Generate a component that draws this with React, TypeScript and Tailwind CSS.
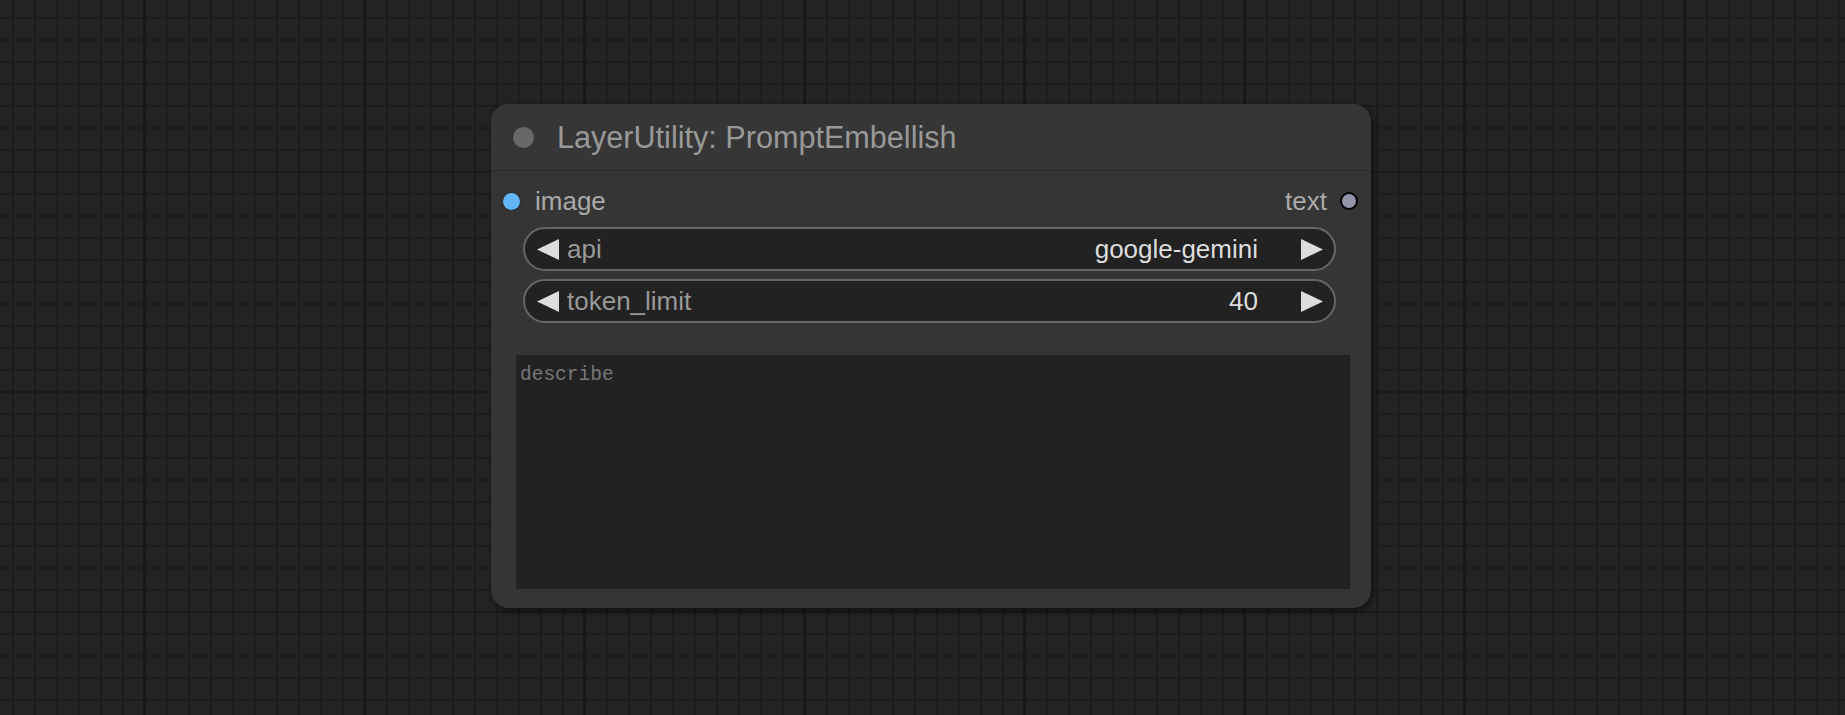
import React from "react";

function LeftArrow() {
  return (
    <svg width="22" height="21" viewBox="0 0 22 21" className="shrink-0">
      <polygon points="22,0 22,21 0,10.5" fill="#dddddd" />
    </svg>
  );
}

function RightArrow() {
  return (
    <svg width="22" height="21" viewBox="0 0 22 21" className="shrink-0">
      <polygon points="0,0 0,21 22,10.5" fill="#dddddd" />
    </svg>
  );
}

function ComboWidget({ label, value, extra }: { label: string; value: string; extra: string }) {
  return (
    <div
      className={`ml-[32px] mr-[35px] h-[44px] rounded-full border-2 border-[#666666] bg-[#222222] flex items-center pl-[12px] pr-[11px] ${extra}`}
    >
      <LeftArrow />
      <span className="ml-[8px] text-[26px] leading-none text-[#999999]">{label}</span>
      <span className="ml-auto text-[26px] leading-none text-[#dddddd]">{value}</span>
      <span className="ml-[43px] flex">
        <RightArrow />
      </span>
    </div>
  );
}

export default function App() {
  return (
    <div
      className="relative w-[1845px] h-[715px] overflow-hidden bg-[#232323] [background-image:linear-gradient(to_right,#181818_3px,transparent_3px),linear-gradient(to_bottom,#1a1a1a_2px,transparent_2px),linear-gradient(to_right,#1c1c1c_2px,transparent_2px),linear-gradient(to_bottom,#1c1c1c_2px,transparent_2px)] [background-size:220px_220px,220px_220px,22px_22px,22px_22px] [background-position:143px_170px,143px_171px,12px_17px,12px_17px]"
      style={{ fontFamily: '"Liberation Sans", Arial, sans-serif' }}
    >
      <div className="absolute left-[491px] top-[104px] w-[880px] h-[504px] rounded-[18px] bg-[#353535] shadow-[2px_3px_7px_rgba(0,0,0,0.55)] flex flex-col overflow-hidden">
        {/* title */}
        <div className="h-[67px] shrink-0 bg-[#363636] border-b border-[#292929] flex items-center pl-[22px] gap-[23px]">
          <div className="w-[21px] h-[21px] rounded-full bg-[#686868]" />
          <span className="text-[30.6px] leading-none text-[#999999]">LayerUtility: PromptEmbellish</span>
        </div>
        {/* slots */}
        <div className="mt-[8px] h-[44px] flex items-center justify-between pl-[12px] pr-[13px]">
          <div className="flex items-center gap-[15px]">
            <div className="w-[17px] h-[17px] rounded-full bg-[#64b5f6] shadow-[0_0_2px_rgba(0,0,0,0.6)]" />
            <span className="text-[26px] leading-none text-[#aaaaaa]">image</span>
          </div>
          <div className="flex items-center gap-[13px]">
            <span className="text-[26px] leading-none text-[#aaaaaa]">text</span>
            <div className="w-[18px] h-[18px] rounded-full bg-[#9393a9] border-2 border-black" />
          </div>
        </div>
        <ComboWidget label="api" value="google-gemini" extra="mt-[4px]" />
        <ComboWidget label="token_limit" value="40" extra="mt-[8px]" />
        {/* textarea */}
        <div className="mt-[32px] ml-[25px] mr-[21px] h-[234px] bg-[#222222] pl-[4px] pt-[8px]">
          <span
            className="text-[19.5px] leading-[1.2] text-[#777777]"
            style={{ fontFamily: '"Liberation Mono", "DejaVu Sans Mono", monospace' }}
          >
            describe
          </span>
        </div>
      </div>
    </div>
  );
}
